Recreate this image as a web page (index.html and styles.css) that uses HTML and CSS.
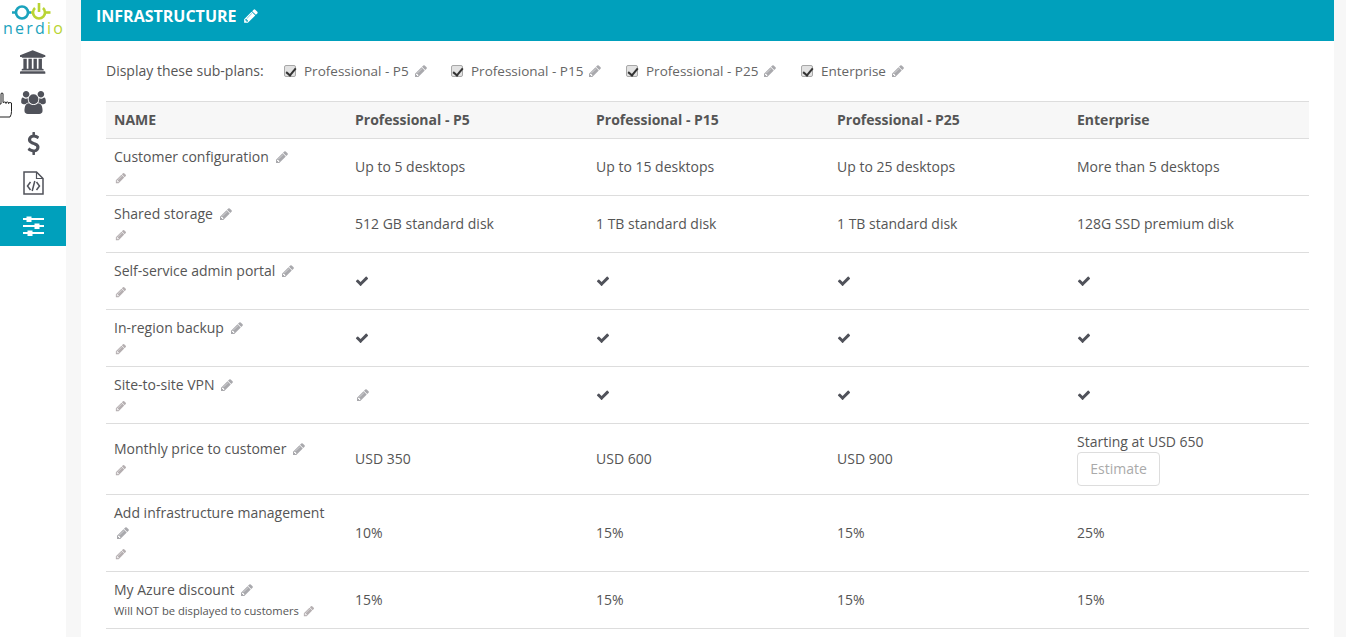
FILE: index.html
```html
<!DOCTYPE html>
<html lang="en">
<head>
<meta charset="utf-8">
<title>Infrastructure</title>
<link rel="stylesheet" href="styles.css">
</head>
<body>
<svg class="defs" aria-hidden="true">
  <symbol id="pencil" viewBox="0 0 1792 1792"><path d="M491 1536l91-91-235-235-91 91v107h128v128h107zm523-928q0-22-22-22-10 0-17 7l-542 542q-7 7-7 17 0 22 22 22 10 0 17-7l542-542q7-7 7-17zm-54-192l416 416-832 832h-416v-416zm683 96q0 53-37 90l-166 166-416-416 166-165q36-38 90-38 53 0 91 38l235 234q37 39 37 91z"/></symbol>
  <symbol id="check" viewBox="0 0 1792 1792"><path d="M1671 566q0 40-28 68l-724 724-136 136q-28 28-68 28t-68-28l-136-136-362-362q-28-28-28-68t28-68l136-136q28-28 68-28t68 28l294 295 656-657q28-28 68-28t68 28l136 136q28 28 28 68z"/></symbol>
</svg>
<div class="app">
  <nav class="sidebar">
    <div class="logo">
      <svg class="logo-mark" viewBox="0 0 66 22" fill="none" stroke-width="2.600">
        <circle cx="22" cy="12.500" r="6" stroke="#1ba3bd"/>
        <path d="M12 12.500h4M28 12.500h3" stroke="#1ba3bd"/>
        <path d="M31 12.500h3" stroke="#b9d433"/>
        <path d="M35 8a6 6 0 1 0 8 0" stroke="#b9d433"/>
        <path d="M39 3v9" stroke="#b9d433"/>
        <path d="M45 12.500h5.500" stroke="#b9d433"/>
      </svg>
      <div class="logo-text"><span class="logo-blue">nerd</span><span class="logo-green">io</span></div>
    </div>
    <a class="nav-item"><svg class="nav-icon bank" viewBox="0 0 2048 1792"><path d="M960 0l960 384v128h-128q0 26-20.500 45t-48.500 19h-1526q-28 0-48.500-19t-20.500-45h-128v-128zm-704 640h256v768h128v-768h256v768h128v-768h256v768h128v-768h256v768h59q28 0 48.500 19t20.500 45v64h-1664v-64q0-26 20.500-45t48.500-19h59v-768zm1595 960q28 0 48.500 19t20.500 45v128h-1920v-128q0-26 20.500-45t48.500-19h1782z"/></svg></a>
    <a class="nav-item"><svg class="nav-icon users" viewBox="0 0 1920 1792"><path d="M593 896q-162 5-265 128h-134q-82 0-138-40.500t-56-118.500q0-353 124-353 6 0 43.500 21t97.500 42.500 119 21.500q67 0 133-23-5 37-5 66 0 139 81 256zm1071 637q0 120-73 189.500t-194 69.500h-874q-121 0-194-69.500t-73-189.500q0-53 3.500-103.500t14-109 26.500-108.500 43-97.500 62-81 85.500-53.500 111.500-20q10 0 43 21.500t73 48 107 48 135 21.500 135-21.500 107-48 73-48 43-21.500q61 0 111.500 20t85.500 53.500 62 81 43 97.500 26.500 108.500 14 109 3.500 103.500zm-1024-1277q0 106-75 181t-181 75-181-75-75-181 75-181 181-75 181 75 75 181zm704 384q0 159-112.500 271.500t-271.500 112.500-271.500-112.500-112.500-271.500 112.500-271.500 271.500-112.500 271.500 112.500 112.500 271.500zm576 225q0 78-56 118.500t-138 40.500h-134q-103-123-265-128 81-117 81-256 0-29-5-66 66 23 133 23 59 0 119-21.500t97.500-42.500 43.500-21q124 0 124 353zm-128-609q0 106-75 181t-181 75-181-75-75-181 75-181 181-75 181 75 75 181z"/></svg></a>
    <a class="nav-item"><svg class="nav-icon dollar" viewBox="300 0 1100 1792"><path d="M1362 1185q0 153-99.500 263.500t-258.500 136.500v175q0 14-9 23t-23 9h-135q-13 0-22.500-9.500t-9.500-22.500v-175q-66-9-127.500-31t-101.500-44.500-74-48-46.500-37.500-17.500-18q-17-21-2-41l103-135q7-10 23-12 15-2 24 9l2 2q113 99 243 125 37 8 74 8 81 0 142.500-43t61.500-122q0-28-15-53t-33.500-42-58.500-37.500-66-32-80-32.500q-39-16-61.500-25t-61.500-26.500-62.500-31-56.500-35.500-53.500-42.500-43.500-49-35.500-58-21-66.500-8.500-78q0-138 98-242t255-134v-180q0-13 9.500-22.500t22.500-9.500h135q14 0 23 9t9 23v176q57 6 110.500 23t87 33.500 63.500 37.500 39 29 15 14q17 18 5 38l-81 146q-8 15-23 16-14 3-27-7-3-3-14.500-12t-39-26.500-58.500-32-74.500-26-85.500-11.500q-95 0-155 43t-60 111q0 26 8.500 48t29.500 41.500 39.500 33 56 31 60.500 27 70 27.500q53 20 81 31.500t76 35 75.500 42.500 62 50 53 63.500 31.500 76.500 13 94z"/></svg></a>
    <a class="nav-item"><svg class="nav-icon file" viewBox="0 0 21 24" fill="none" stroke-width="1.500"><path d="M1 1h12.500l6.500 6.500v15.500h-19z"/><path d="M13.500 1v6.500h6.500" stroke-width="1.200"/><path d="M7.500 11l-3 4 3 4M13.500 11l3 4-3 4M11.800 10l-2.600 10" stroke-width="1.500"/></svg></a>
    <a class="nav-item active"><svg class="nav-icon sliders" viewBox="0 0 21 20"><rect y="2" width="21" height="2"/><rect x="3.500" y="0.500" width="5" height="5.500"/><rect y="9" width="21" height="2"/><rect x="11.500" y="7.500" width="5" height="5.500"/><rect y="16" width="21" height="2"/><rect x="4.500" y="14.500" width="5" height="5.500"/></svg></a>
  </nav>
  <svg class="cursor" viewBox="0 0 13 26" fill="#fff" stroke="#222" stroke-width="1"><path d="M-1 12l2 0v-10.500q1-1 2 0v9q1.500-1 3 0v1-1q1.500-1 2.500 0v1-.5q1.500-1 3 0v8.500q0 3-1.500 5.500h-12"/></svg>
  <main class="panel">
    <header class="panel-head"><h1>INFRASTRUCTURE</h1><svg class="pi pi-head"><use href="#pencil"/></svg></header>
    <div class="panel-body">
      <div class="filters">
        <span class="filters-label">Display these sub-plans:</span>
        <label class="filter f1"><input type="checkbox" checked><span>Professional - P5</span><svg class="pi"><use href="#pencil"/></svg></label>
        <label class="filter f2"><input type="checkbox" checked><span>Professional - P15</span><svg class="pi"><use href="#pencil"/></svg></label>
        <label class="filter f3"><input type="checkbox" checked><span>Professional - P25</span><svg class="pi"><use href="#pencil"/></svg></label>
        <label class="filter"><input type="checkbox" checked><span>Enterprise</span><svg class="pi"><use href="#pencil"/></svg></label>
      </div>
      <table class="plans">
        <colgroup><col class="c-wide"><col class="c-wide"><col class="c-wide"><col class="c-nar"><col class="c-nar"></colgroup>
        <thead><tr><th>NAME</th><th>Professional - P5</th><th>Professional - P15</th><th>Professional - P25</th><th>Enterprise</th></tr></thead>
        <tbody>
          <tr><td><div>Customer configuration<svg class="pi"><use href="#pencil"/></svg></div><div><svg class="pi-sub"><use href="#pencil"/></svg></div></td><td>Up to 5 desktops</td><td>Up to 15 desktops</td><td>Up to 25 desktops</td><td>More than 5 desktops</td></tr>
          <tr><td><div>Shared storage<svg class="pi"><use href="#pencil"/></svg></div><div><svg class="pi-sub"><use href="#pencil"/></svg></div></td><td>512 GB standard disk</td><td>1 TB standard disk</td><td>1 TB standard disk</td><td>128G SSD premium disk</td></tr>
          <tr><td><div>Self-service admin portal<svg class="pi"><use href="#pencil"/></svg></div><div><svg class="pi-sub"><use href="#pencil"/></svg></div></td><td><svg class="ck"><use href="#check"/></svg></td><td><svg class="ck"><use href="#check"/></svg></td><td><svg class="ck"><use href="#check"/></svg></td><td><svg class="ck"><use href="#check"/></svg></td></tr>
          <tr><td><div>In-region backup<svg class="pi"><use href="#pencil"/></svg></div><div><svg class="pi-sub"><use href="#pencil"/></svg></div></td><td><svg class="ck"><use href="#check"/></svg></td><td><svg class="ck"><use href="#check"/></svg></td><td><svg class="ck"><use href="#check"/></svg></td><td><svg class="ck"><use href="#check"/></svg></td></tr>
          <tr><td><div>Site-to-site VPN<svg class="pi pi-tight"><use href="#pencil"/></svg></div><div><svg class="pi-sub"><use href="#pencil"/></svg></div></td><td><svg class="pi pi-cell"><use href="#pencil"/></svg></td><td><svg class="ck"><use href="#check"/></svg></td><td><svg class="ck"><use href="#check"/></svg></td><td><svg class="ck"><use href="#check"/></svg></td></tr>
          <tr><td><div>Monthly price to customer<svg class="pi"><use href="#pencil"/></svg></div><div><svg class="pi-sub"><use href="#pencil"/></svg></div></td><td>USD 350</td><td>USD 600</td><td>USD 900</td><td><div>Starting at USD 650</div><button class="estimate" type="button">Estimate</button></td></tr>
          <tr><td><div>Add infrastructure management</div><div><svg class="pi pi-block"><use href="#pencil"/></svg></div><div><svg class="pi-sub"><use href="#pencil"/></svg></div></td><td>10%</td><td>15%</td><td>15%</td><td>25%</td></tr>
          <tr><td><div>My Azure discount<svg class="pi pi-tight"><use href="#pencil"/></svg></div><div class="note">Will NOT be displayed to customers<svg class="pi-sub pi-note"><use href="#pencil"/></svg></div></td><td>15%</td><td>15%</td><td>15%</td><td>15%</td></tr>
        </tbody>
      </table>
    </div>
  </main>
</div>
</body>
</html>
```

FILE: styles.css
```css
* { box-sizing: border-box; }
html, body { height: 100%; margin: 0; overflow: hidden; }
body { background: #f7f7f7; color: #555; font: 14px/20px "Open Sans", "Noto Sans", sans-serif; }
.defs { display: none; }
.app { display: flex; height: 637px; position: relative; }

.sidebar { width: 66px; flex: none; background: #fff; display: flex; flex-direction: column; }
.logo { height: 41px; display: flex; flex-direction: column; align-items: center; }
.logo-mark { width: 66px; height: 22px; display: block; flex: none; }
.logo-text { font-size: 16px; line-height: 12px; letter-spacing: 2.200px; margin-left: 2px; }
.logo-blue { color: #1ba3bd; }
.logo-green { color: #b9d433; }
.nav-item { height: 41px; display: flex; align-items: center; justify-content: center; }
.nav-item.active { background: #00a0bc; height: 40px; margin-top: 1px; }
.nav-icon { fill: #50525a; stroke: none; display: block; }
.bank { width: 27px; height: 24px; }
.users { width: 25px; height: 23px; margin-top: -1px; }
.dollar { width: 14px; height: 25px; margin-top: -1px; }
.file { width: 21px; height: 24px; fill: none; stroke: #50525a; margin-top: -4px; }
.sliders { width: 21px; height: 20px; fill: #fff; }
.cursor { position: absolute; left: 0; top: 92px; width: 13px; height: 26px; }

.panel { width: 1253px; margin-left: 15px; background: #fff; flex: none; }
.panel-head { height: 41px; background: #00a0bc; color: #fff; display: flex; align-items: flex-start; padding: 5px 15px 0; }
.panel-head h1 { margin: 0; font-size: 16px; line-height: 22px; font-weight: 700; }
.pi { width: 14px; height: 14px; fill: #a9a9ad; margin-left: 6px; vertical-align: -2px; }
.pi-tight { margin-left: 5px; }
.pi-head { width: 16px; height: 16px; fill: #fff; margin-top: 3px; margin-left: 6px; }
.pi-sub { width: 12px; height: 12px; fill: #b5afb1; margin-left: 1px; vertical-align: -2px; }
.pi-block { margin-left: 2px; }
.pi-cell { margin-left: 1px; }
.pi-note { margin-left: 4px; }

.panel-body { padding: 0 25px; }
.filters { height: 60px; display: flex; align-items: center; }
.filters-label { width: 178px; flex: none; }
.filter { display: flex; align-items: center; color: #666; }
.filter .pi { margin-left: 5px; }
.filter input { appearance: none; position: relative; width: 12px; height: 12px; margin: 0 8px 0 0; background: #e2e2e2; border: 1px solid #a8a8a8; border-radius: 2px; flex: none; }
.filter input::after { content: ""; position: absolute; left: 3px; top: 0; width: 4px; height: 8px; border: solid #333; border-width: 0 2px 2px 0; transform: rotate(40deg); }
.filter span { font-size: 13.500px; }
.f1 { width: 167px; }
.f2 { width: 175px; }
.f3 { width: 175px; }

.plans { width: 1203px; table-layout: fixed; border-collapse: collapse; }
.c-wide { width: 241px; }
.c-nar { width: 240px; }
.plans th, .plans td { padding: 8px; vertical-align: middle; text-align: left; border-bottom: 1px solid #ddd; }
.plans th { background: #f7f7f7; border-top: 1px solid #ddd; font-weight: 700; padding: 8px; height: 37px; }
.ck { width: 14px; height: 14px; fill: #50525a; display: block; }
.note { font-size: 11.200px; padding-top: 1px; margin-bottom: -1px; }
.estimate { display: block; width: 83px; height: 34px; padding: 0; border: 1px solid #ddd; border-radius: 4px; background: #fff; color: #aaa; font: 14px/20px "Open Sans", "Noto Sans", sans-serif; }
```
